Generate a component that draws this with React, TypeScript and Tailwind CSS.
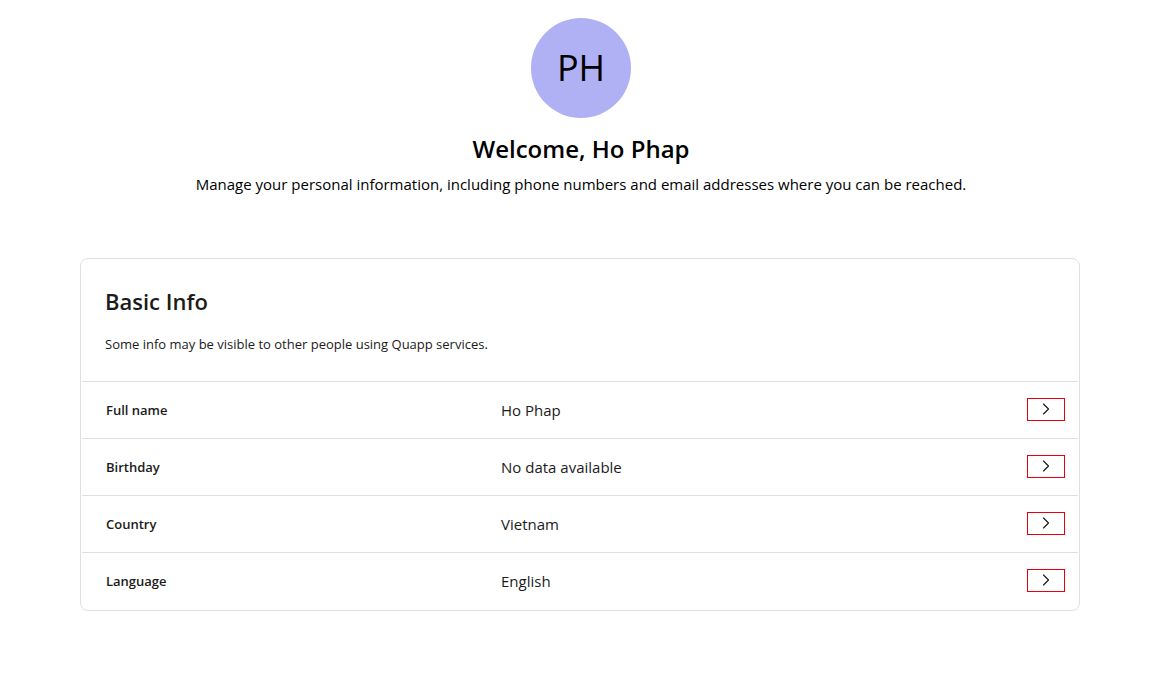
import { ChevronRight } from "lucide-react";

const rows = [
    { label: "Full name", value: "Ho Phap" },
    { label: "Birthday", value: "No data available" },
    { label: "Country", value: "Vietnam" },
    { label: "Language", value: "English" },
];

export default function App() {
    return (
        <div className="min-h-[689px] bg-white text-black font-['Segoe_UI','Open_Sans',sans-serif]">
            {/* Header */}
            <div className="flex flex-col items-center pt-[18px]">
                <div className="w-[100px] h-[100px] rounded-full bg-[#b0b0f5] flex items-center justify-center text-[36px] text-black">
                    PH
                </div>
                <h1 className="mt-[14px] text-[24px] font-semibold leading-[34px]">Welcome, Ho Phap</h1>
                <p className="mt-[8px] text-[15px] leading-[20px]">
                    Manage your personal information, including phone numbers and email addresses where you can be reached.
                </p>
            </div>

            {/* Card */}
            <div className="ml-[80px] w-[1000px] mt-[64px] border border-[#e0e0e0] rounded-lg">
                <div className="px-6 pt-[27px] pb-[28px]">
                    <h2 className="text-[22px] font-semibold leading-[30px] text-[#1b1b1b]">Basic Info</h2>
                    <p className="mt-[19px] text-[13px] leading-[18px] text-[#1b1b1b]">
                        Some info may be visible to other people using Quapp services.
                    </p>
                </div>
                <div className="mx-px pb-px">
                    {rows.map((row) => (
                        <div key={row.label} className="flex items-center h-[57px] border-t border-[#e0e0e0]">
                            <div className="w-[419px] pl-6 pt-[2px] text-[13px] font-semibold text-[#1b1b1b]">{row.label}</div>
                            <div className="flex-1 pt-[1px] text-[15px] text-[#1b1b1b]">{row.value}</div>
                            <button className="mr-[13px] mb-[2px] w-[38px] h-[23px] border border-red-600 flex items-center justify-center">
                                <ChevronRight className="w-5 h-5 text-[#1b1b1b]" strokeWidth={1.4} />
                            </button>
                        </div>
                    ))}
                </div>
            </div>
        </div>
    );
}
